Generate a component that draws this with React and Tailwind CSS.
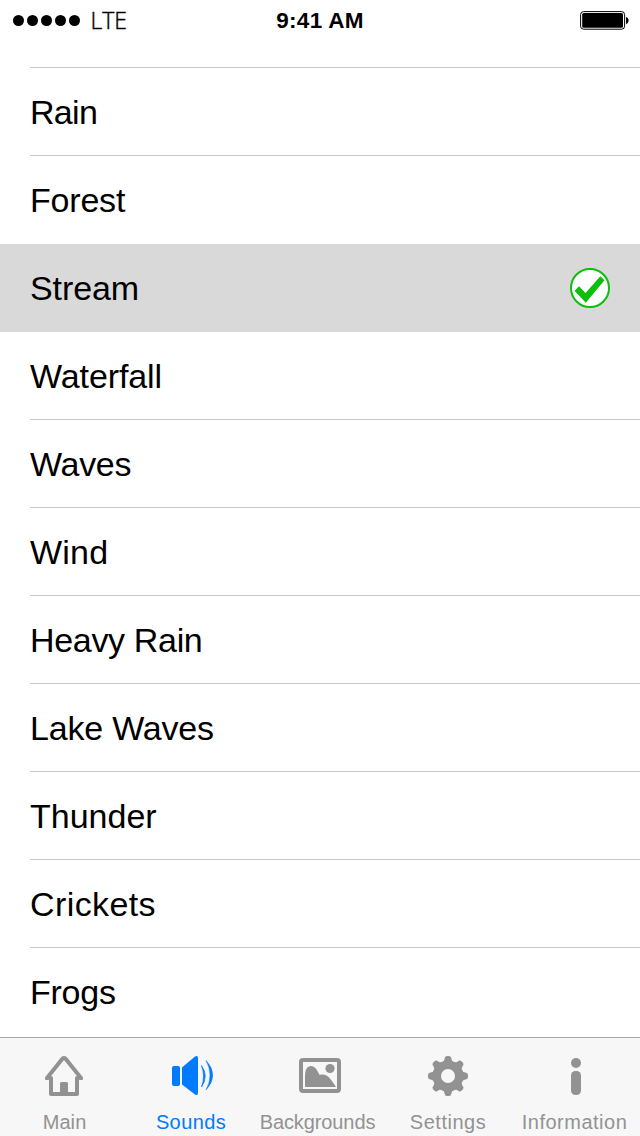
import React from "react";

const sounds = [
  { name: "Rain", tracking: "tracking-[-0.7px]" },
  { name: "Forest", tracking: "tracking-[-0.2px]" },
  { name: "Stream", tracking: "tracking-[-0.1px]", selected: true },
  { name: "Waterfall", tracking: "tracking-[-0.1px]" },
  { name: "Waves", tracking: "tracking-[-0.3px]" },
  { name: "Wind", tracking: "tracking-[0.2px]" },
  { name: "Heavy Rain", tracking: "tracking-[-0.33px]" },
  { name: "Lake Waves", tracking: "tracking-[-0.2px]" },
  { name: "Thunder", tracking: "tracking-[0px]" },
  { name: "Crickets", tracking: "tracking-[0.4px]" },
  { name: "Frogs", tracking: "tracking-[-0.25px]" },
];

function StatusBar() {
  return (
    <header className="flex h-[67px] shrink-0 items-start">
      <div className="flex w-[213px] items-center pl-[13px] pt-[5px]">
        <div className="flex gap-[3px]">
          {[0, 1, 2, 3, 4].map((i) => (
            <span key={i} className="size-[11px] rounded-full bg-black" />
          ))}
        </div>
        <span className="ml-[10.500px] font-['Open_Sans',sans-serif] text-[23px] leading-[30px] font-light [-webkit-text-stroke:0.4px_#000]">
          LTE
        </span>
      </div>
      <div className="w-[214px] pt-[6px] text-center text-[22.5px] leading-[30px] font-bold tracking-[0.3px]">9:41 AM</div>
      <div className="flex flex-1 justify-end pr-[10px] pt-[10px]">
        <svg width="50" height="21" viewBox="0 0 50 21">
          <rect x="0.6" y="1.6" width="44" height="17.600" rx="3" fill="none" stroke="#000" strokeWidth="1" />
          <rect x="2.200" y="3.100" width="40.800" height="14.600" rx="1.500" />
          <path d="M46 7c3.4.8 3.4 6.200 0 7z" />
        </svg>
      </div>
    </header>
  );
}

function CheckBadge() {
  return (
    <svg width="40" height="40" viewBox="0 0 40 40">
      <circle cx="20" cy="20" r="19" fill="#fff" stroke="#0bbf0b" strokeWidth="2" />
      <path d="M4.500 22.800L9 18.300L15.500 25L30.300 8.200L34.500 12.300L15.800 34.800z" fill="#0bbf0b" />
    </svg>
  );
}

function HomeIcon() {
  return (
    <svg width="50" height="50" viewBox="39 1051 50 50" fill="none" stroke="#929292">
      <path d="M51 1078v16h26v-16M47 1078L62.200 1059q1.800-1.700 3.600 0L81 1078" strokeWidth="4" strokeLinejoin="round" strokeLinecap="round" />
      <path d="M44.800 1079.800L51 1072v7.800zM83.200 1079.800L77 1072v7.800z" fill="#929292" stroke="none" />
      <path d="M60 1095v-11.500q0-1.500 1.500-1.500h5q1.500 0 1.500 1.500V1095z" fill="#929292" stroke="none" />
    </svg>
  );
}

function SpeakerIcon() {
  return (
    <svg width="50" height="50" viewBox="167 1051 50 50" fill="#007aff">
      <rect x="172" y="1066" width="8" height="20" rx="2" />
      <path d="M182 1067.500L195 1056.500q3-1.500 3 1.500v35q0 3-3 1.500L182 1084.500z" />
      <path d="M201.500 1065.500q7.500 10.500 0 21.500q4-11 0-21.500z" stroke="#007aff" strokeWidth=".7" />
      <path d="M206 1060.500q13.500 14.500 0 29.500q8-15 0-29.500z" stroke="#007aff" strokeWidth=".5" />
    </svg>
  );
}

function PictureIcon() {
  return (
    <svg width="50" height="50" viewBox="295 1051 50 50" fill="#929292">
      <rect x="301" y="1060" width="38" height="31" rx="2" fill="none" stroke="#929292" strokeWidth="4" />
      <circle cx="330" cy="1068.500" r="4.600" />
      <path d="M305 1087v-11c0-6 2-10 6-10c4 0 6.500 4.500 8.500 9c8-2 11 4 16.500 12z" />
    </svg>
  );
}

function GearIcon() {
  return (
    <svg width="50" height="50" viewBox="-25 -25 50 50">
      <circle r="11.200" fill="none" stroke="#929292" strokeWidth="8.400" />
      {["rotate(0)", "rotate(45)", "rotate(90)", "rotate(135)", "rotate(180)", "rotate(225)", "rotate(270)", "rotate(315)"].map((t) => (
        <path key={t} transform={t} d="M-5.500-14Q-3.600-15-3.400-17.500Q-3.200-20-1-20h2Q3.200-20 3.400-17.500Q3.600-15 5.500-14z" fill="#929292" />
      ))}
    </svg>
  );
}

function InfoIcon() {
  return (
    <svg width="50" height="50" viewBox="551 1051 50 50" fill="#929292">
      <circle cx="576" cy="1063" r="5" />
      <rect x="571" y="1071" width="10" height="24" rx="4.500" />
    </svg>
  );
}

const tabs = [
  { label: "Main", Icon: HomeIcon, style: "tracking-[0.1px] pl-px" },
  { label: "Sounds", Icon: SpeakerIcon, style: "tracking-[0.4px] pr-[2px]" },
  { label: "Backgrounds", Icon: PictureIcon, style: "tracking-[-0.1px] pr-[5px]" },
  { label: "Settings", Icon: GearIcon, style: "tracking-[0.5px]" },
  { label: "Information", Icon: InfoIcon, style: "tracking-[0.5px] pr-[3px]" },
];

export default function App() {
  return (
    <div className="flex h-[1136px] w-[640px] flex-col overflow-hidden bg-white font-['Liberation_Sans',Arial,sans-serif] text-black">
      <StatusBar />
      <main className="flex-1">
        <div className="ml-[30px] h-px bg-[#c8c7cc]" />
        <ul>
          {sounds.map((s, i) => (
            <li key={s.name} className={s.selected ? "h-[88px] bg-[#d9d9d9] pl-[30px]" : "h-[88px] pl-[30px]"}>
              <div
                className={
                  s.selected || i === 1 || i === sounds.length - 1
                    ? "flex h-full items-center justify-between pr-[30px]"
                    : "flex h-full items-center justify-between border-b border-[#c8c7cc] pr-[30px]"
                }
              >
                <span className={`text-[34px] leading-[40px] ${s.tracking}`}>{s.name}</span>
                {s.selected && <CheckBadge />}
              </div>
            </li>
          ))}
        </ul>
      </main>
      <nav className="grid h-[99px] shrink-0 grid-cols-5 border-t border-[#a8a8a8] bg-[#f7f7f7]">
        {tabs.map(({ label, Icon, style }) => (
          <div key={label} className={label === "Sounds" ? "flex flex-col items-center pt-[13px] text-[#007aff]" : "flex flex-col items-center pt-[13px] text-[#929292]"}>
            <Icon />
            <span className={`mt-[9px] text-[20px] leading-[24px] ${style}`}>{label}</span>
          </div>
        ))}
      </nav>
    </div>
  );
}
